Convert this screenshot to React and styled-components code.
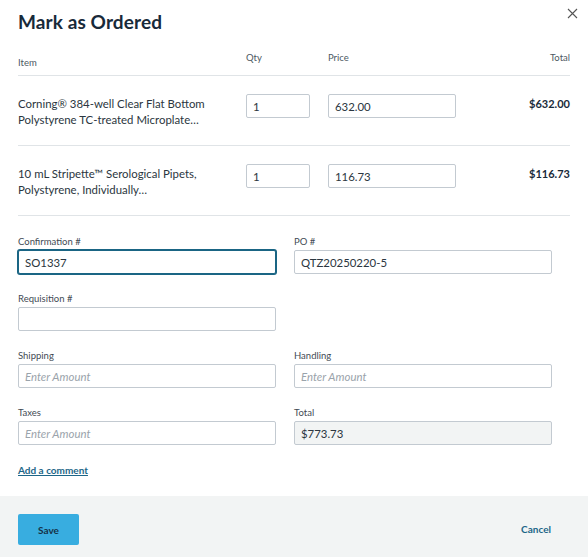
import React from "react";
import styled, { createGlobalStyle } from "styled-components";

const Global = createGlobalStyle`
  html, body { margin: 0; padding: 0; background: #fff; }
  body { font-family: Lato, "Open Sans", Arial, sans-serif; color: #2b3640; }
  * { box-sizing: border-box; }
`;

const Modal = styled.div`
  width: 588px;
  height: 557px;
  display: flex;
  flex-direction: column;
  position: relative;
  background: #fff;
`;

const Body = styled.div`
  flex: 1;
  padding: 0 18px;
`;

const Title = styled.h1`
  margin: 0;
  padding-top: 10px;
  font-size: 19px;
  line-height: 24px;
  font-weight: 700;
  color: #182a3a;
  letter-spacing: 0.1px;
`;

const Close = styled.button`
  position: absolute;
  top: 6px;
  right: 9px;
  width: 14px;
  height: 14px;
  padding: 0;
  border: 0;
  background: none;
  display: flex;
  align-items: center;
  justify-content: center;
`;

const Grid = styled.div`
  display: grid;
  grid-template-columns: 210px 64px 128px 1fr;
  column-gap: 18px;
`;

const HeadRow = styled(Grid)`
  margin-top: 17px;
  padding-bottom: 5px;
  border-bottom: 1px solid #e0e4e7;
  font-size: 9.5px;
  color: #4d5963;
  line-height: 14px;
`;

const HeadCell = styled.div`
  text-align: ${(p) => (p.$right ? "right" : "left")};
  padding-top: ${(p) => (p.$low ? "5px" : "0")};
`;

const ItemRow = styled(Grid)`
  padding: 18px 0 17px;
  border-bottom: 1px solid #e0e4e7;
  align-items: start;
`;

const ItemName = styled.div`
  font-size: 11.4px;
  line-height: 16px;
  margin-top: 2px;
  color: #2b3640;
  height: 32px;
`;

const LineTotal = styled.div`
  text-align: right;
  font-weight: 700;
  font-size: 11px;
  line-height: 14px;
  color: #182a3a;
  padding-top: 3px;
`;

const Input = styled.input`
  width: 100%;
  height: 24px;
  border: 1px solid ${(p) => (p.$focus ? "#1a6584" : "#c3cad1")};
  box-shadow: ${(p) => (p.$focus ? "0 0 0 1px #1a6584" : "none")};
  border-radius: 2px;
  padding: 0 6px;
  font-family: Lato, "Open Sans", Arial, sans-serif;
  font-size: 11.4px;
  color: #2b3640;
  background: ${(p) => (p.$disabled ? "#f2f4f4" : "#fff")};
  outline: none;
  &::placeholder {
    color: #9aa3ab;
    font-style: italic;
  }
`;

const Form = styled.div`
  width: 534px;
  padding-top: 19px;
  display: grid;
  grid-template-columns: 1fr 1fr;
  column-gap: 18px;
  row-gap: 18px;
`;

const Field = styled.div`
  display: flex;
  flex-direction: column;
`;

const Label = styled.label`
  font-size: 9.5px;
  line-height: 14px;
  margin-bottom: 1px;
  color: #3f4a54;
`;

const Link = styled.a`
  display: inline-block;
  margin-top: 18px;
  font-size: 10px;
  font-weight: 700;
  color: #1d6688;
  text-decoration: underline;
  line-height: 14px;
`;

const Footer = styled.div`
  height: 61px;
  background: #f2f4f4;
  padding: 18px 37px 0 18px;
  display: flex;
  justify-content: space-between;
  align-items: flex-start;
`;

const SaveButton = styled.button`
  width: 61px;
  height: 31px;
  border: 0;
  border-radius: 2px;
  background: #38ade0;
  color: #163247;
  font-family: Lato, "Open Sans", Arial, sans-serif;
  font-weight: 700;
  font-size: 10px;
`;

const CancelButton = styled.button`
  border: 0;
  background: none;
  padding: 0;
  margin-top: 9px;
  font-family: Lato, "Open Sans", Arial, sans-serif;
  font-weight: 700;
  font-size: 10px;
  color: #1d6688;
`;

const items = [
  {
    name: "Corning® 384-well Clear Flat Bottom Polystyrene TC-treated Microplate…",
    qty: "1",
    price: "632.00",
    total: "$632.00",
  },
  {
    name: "10 mL Stripette™ Serological Pipets, Polystyrene, Individually…",
    qty: "1",
    price: "116.73",
    total: "$116.73",
  },
];

export default function App() {
  return (
    <Modal>
      <Global />
      <Close aria-label="Close">
        <svg width="11" height="11" viewBox="0 0 11 11">
          <path d="M1 1 L10 10 M10 1 L1 10" stroke="#555" strokeWidth="1.1" />
        </svg>
      </Close>
      <Body>
        <Title>Mark as Ordered</Title>
        <HeadRow>
          <HeadCell $low>Item</HeadCell>
          <HeadCell>Qty</HeadCell>
          <HeadCell>Price</HeadCell>
          <HeadCell $right>Total</HeadCell>
        </HeadRow>
        {items.map((it) => (
          <ItemRow key={it.price}>
            <ItemName>{it.name}</ItemName>
            <Input defaultValue={it.qty} />
            <Input defaultValue={it.price} />
            <LineTotal>{it.total}</LineTotal>
          </ItemRow>
        ))}
        <Form>
          <Field>
            <Label>Confirmation #</Label>
            <Input $focus defaultValue="SO1337" />
          </Field>
          <Field>
            <Label>PO #</Label>
            <Input defaultValue="QTZ20250220-5" />
          </Field>
          <Field>
            <Label>Requisition #</Label>
            <Input />
          </Field>
          <div />
          <Field>
            <Label>Shipping</Label>
            <Input placeholder="Enter Amount" />
          </Field>
          <Field>
            <Label>Handling</Label>
            <Input placeholder="Enter Amount" />
          </Field>
          <Field>
            <Label>Taxes</Label>
            <Input placeholder="Enter Amount" />
          </Field>
          <Field>
            <Label>Total</Label>
            <Input $disabled readOnly defaultValue="$773.73" />
          </Field>
        </Form>
        <Link href="#">Add a comment</Link>
      </Body>
      <Footer>
        <SaveButton>Save</SaveButton>
        <CancelButton>Cancel</CancelButton>
      </Footer>
    </Modal>
  );
}
